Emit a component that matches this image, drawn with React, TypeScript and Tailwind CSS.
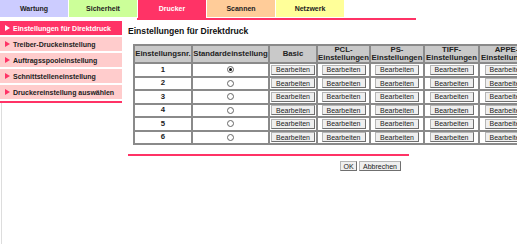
import React from "react";

const tabs = [
  { label: "Wartung", bg: "bg-[#ccccff]", text: "text-[#222]", h: "h-[17px]" },
  { label: "Sicherheit", bg: "bg-[#ccff99]", text: "text-[#222]", h: "h-[17px]" },
  { label: "Drucker", bg: "bg-[#ff3366]", text: "text-white", h: "h-[18px]" },
  { label: "Scannen", bg: "bg-[#ffcc99]", text: "text-[#222]", h: "h-[17px]" },
  { label: "Netzwerk", bg: "bg-[#ffff99]", text: "text-[#222]", h: "h-[17px]" },
];

const sideItems = [
  "Einstellungen für Direktdruck",
  "Treiber-Druckeinstellung",
  "Auftragsspooleinstellung",
  "Schnittstelleneinstellung",
  "Druckereinstellung auswählen",
];

function Tri({ color }: { color: string }) {
  return (
    <svg width="5" height="6" viewBox="0 0 5 6" className="shrink-0">
      <polygon points="0,0 5,3 0,6" fill={color} />
    </svg>
  );
}

function Btn({ children, w }: { children: React.ReactNode; w: string }) {
  return (
    <div
      className={`${w} h-[10px] flex items-center justify-center bg-[#efefef] border border-[#b5b5b5] border-r-[#6f6f6f] border-b-[#6f6f6f] text-[7px] leading-none text-[#222] whitespace-nowrap overflow-hidden`}
    >
      {children}
    </div>
  );
}

function Radio({ checked }: { checked: boolean }) {
  return (
    <div className="w-[7px] h-[7px] rounded-full border border-[#666] bg-white flex items-center justify-center mx-auto">
      {checked && <div className="w-[3px] h-[3px] rounded-full bg-[#111]" />}
    </div>
  );
}

const headers: React.ReactNode[] = [
  "Einstellungsnr.",
  "Standardeinstellung",
  "Basic",
  <>PCL-<br />Einstellungen</>,
  <>PS-<br />Einstellungen</>,
  <>TIFF-<br />Einstellungen</>,
  <>APPE-<br />Einstellungen</>,
];

const colW = [58, 77, 48, 53, 54, 55, 55];

export default function App() {
  return (
    <div
      className="w-[517px] h-[245px] overflow-hidden bg-white"
      style={{ fontFamily: '"Liberation Sans", Arial, sans-serif' }}
    >
      {/* Tabs */}
      <div className="flex items-start h-[18px]">
        {tabs.map((t) => (
          <div
            key={t.label}
            className={`w-[68px] mr-[1px] ${t.h} ${t.bg} ${t.text} flex items-start justify-center pt-[5px] text-[7px] font-bold leading-none`}
          >
            {t.label}
          </div>
        ))}
      </div>
      <div className="ml-[137px] w-[279px] h-[2px] bg-[#ff3366]" />

      <div className="flex mt-[1px]">
        {/* Sidebar */}
        <div className="w-[122px] shrink-0 flex flex-col">
          <div className="flex flex-col gap-[2px]">
            {sideItems.map((s, i) => (
              <div
                key={s}
                className={`h-[14px] flex items-center gap-[3px] pl-[5px] text-[7px] font-bold leading-none ${
                  i === 0 ? "bg-[#ff3366] text-white" : "bg-[#ffcccc] text-[#222]"
                }`}
              >
                <Tri color={i === 0 ? "#ffffff" : "#ff3366"} />
                <span>{s}</span>
              </div>
            ))}
          </div>
          <div className="mt-[2px] h-[2px] bg-[#ff3366]" />
          <div className="ml-[1px] w-[1px] h-[141px] bg-[#dddddd]" />
        </div>

        {/* Main */}
        <div className="ml-[6px] flex-1 min-w-0 pt-[4px]">
          <div className="text-[8.6px] font-bold leading-[12px] text-[#111]">
            Einstellungen für Direktdruck
          </div>
          <table
            className="mt-[7px] ml-[5px] border-collapse table-fixed border-2 border-[#8a8a8a]"
            style={{ width: colW.reduce((a, b) => a + b, 0) }}
          >
            <colgroup>
              {colW.map((w, i) => (
                <col key={i} style={{ width: w }} />
              ))}
            </colgroup>
            <thead>
              <tr className="h-[16px]">
                {headers.map((h, i) => (
                  <th
                    key={i}
                    className="border-2 border-[#8a8a8a] bg-[#c9c9c9] p-0 text-[7.75px] font-bold leading-[8px] text-[#222] text-center whitespace-nowrap overflow-hidden"
                  >
                    {h}
                  </th>
                ))}
              </tr>
            </thead>
            <tbody>
              {[1, 2, 3, 4, 5, 6].map((n) => (
                <tr key={n} className="h-[13.5px]">
                  <td className="border-2 border-[#8a8a8a] p-0 text-center text-[7.75px] font-bold leading-none text-[#222]">
                    {n}
                  </td>
                  <td className="border-2 border-[#8a8a8a] p-0">
                    <Radio checked={n === 1} />
                  </td>
                  {[0, 1, 2, 3, 4].map((c) => (
                    <td key={c} className="border-2 border-[#8a8a8a] p-0">
                      <div className="flex justify-center">
                        <Btn w="w-[44px]">Bearbeiten</Btn>
                      </div>
                    </td>
                  ))}
                </tr>
              ))}
            </tbody>
          </table>
          <div className="mt-[9px] w-[281px] h-[2px] bg-[#ff3366]" />
          <div className="mt-[5px] ml-[212px] flex gap-[2px]">
            <Btn w="w-[17px]">OK</Btn>
            <Btn w="w-[42px]">Abbrechen</Btn>
          </div>
        </div>
      </div>
    </div>
  );
}
